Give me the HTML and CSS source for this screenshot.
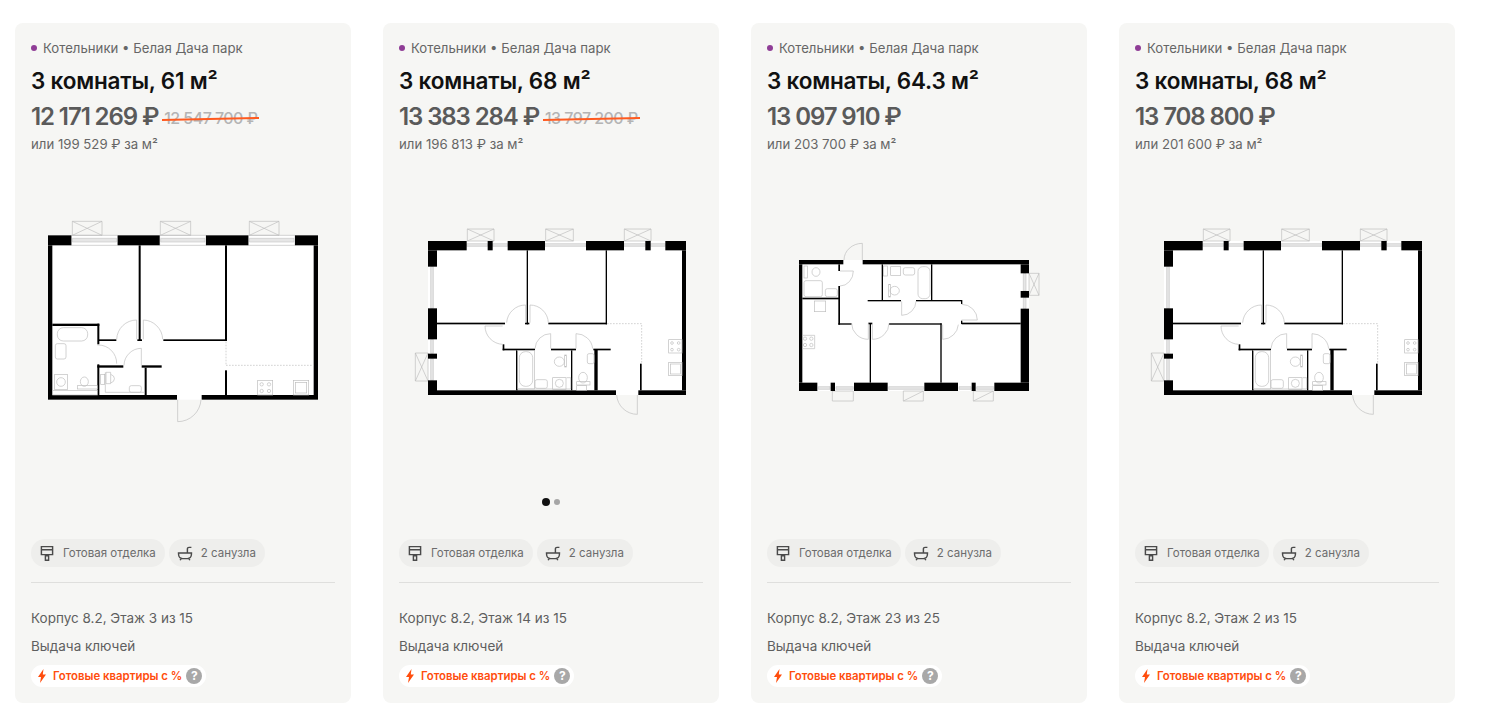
FILE: index.html
```html
<!DOCTYPE html>
<html lang="ru">
<head>
<meta charset="utf-8">
<title>Квартиры</title>
<link rel="stylesheet" href="styles.css">
</head>
<body>
<main class="grid">

<article class="card">
  <header class="head">
    <p class="loc"><span class="dot"></span>Котельники • Белая Дача парк</p>
    <h2 class="title">3 комнаты, 61 м²</h2>
    <p class="price">12 171 269 ₽ <s class="old">12 547 700 ₽</s></p>
    <p class="per">или 199 529 ₽ за м²</p>
  </header>
  <div class="plan">
    <svg class="fp" viewBox="-6 0 870 645">
      <rect class="floor" x="24" y="73" width="810" height="493"/>
      <g class="thin">
        <path d="M97 31h89v42H97zM97 31l89 42M186 31L97 73M361 31h91v42h-91zM361 31l91 42M452 31l-91 42M628 31h89v42h-89zM628 31l89 42M717 31l-89 42"/>
        <path d="M94 73h139v30H94zM359 73h139v30H359zM625 73h140v30H625z"/>
        <path class="band" d="M97 82h133v11H97zM362 82h133v11H362zM628 82h134v11H628z"/>
      </g>
      <g class="wall">
        <rect x="24" y="73" width="70" height="30"/><rect x="233" y="73" width="126" height="30"/><rect x="498" y="73" width="127" height="30"/><rect x="765" y="73" width="69" height="30"/>
        <rect x="24" y="103" width="13" height="449"/><rect x="821" y="103" width="13" height="449"/>
        <rect x="24" y="552" width="387" height="14"/><rect x="485" y="552" width="349" height="14"/>
        <rect x="296" y="103" width="6" height="285"/><rect x="555" y="103" width="6" height="287"/>
        <rect x="370" y="385" width="191" height="5"/><rect x="175" y="385" width="54" height="5"/><rect x="292" y="385" width="14" height="5"/>
        <rect x="37" y="338" width="141" height="7"/><rect x="172" y="338" width="6" height="62"/>
        <rect x="172" y="460" width="6" height="92"/><rect x="172" y="463" width="78" height="7"/><rect x="305" y="463" width="60" height="7"/>
        <rect x="314" y="470" width="6" height="82"/><rect x="555" y="478" width="6" height="74"/>
      </g>
      <g class="thin">
        <path d="M290 385V327A60 60 0 0 0 230 385M310 385V327A60 60 0 0 1 368 385M304 463V412A52 52 0 0 0 252 463M172 402H175A55 55 0 0 1 230 458M413 566V632A70 70 0 0 0 483 566"/>
        <path class="dash" d="M558 392V463M558 463H821"/>
        <rect x="52" y="350" width="91" height="40" rx="18"/><rect x="46" y="398" width="32" height="46" rx="6"/>
        <rect x="44" y="490" width="38" height="46"/><circle cx="63" cy="513" r="13"/><rect x="38" y="538" width="134" height="14"/>
        <ellipse cx="133" cy="512" rx="12" ry="14"/><rect x="112" y="524" width="60" height="10"/>
        <rect x="182" y="490" width="12" height="30"/><path d="M198 484h14v34h-14zM212 490a18 14 0 0 1 0 26"/><rect x="268" y="524" width="36" height="20" rx="6"/><path d="M196 484v60h118"/>
        <rect x="653" y="508" width="45" height="44"/><circle cx="665" cy="520" r="5"/><circle cx="687" cy="520" r="5"/><circle cx="665" cy="540" r="5"/><circle cx="687" cy="540" r="5"/>
        <rect x="760" y="508" width="46" height="44"/><rect x="766" y="514" width="34" height="32"/>
      </g>
    </svg>
  </div>
  <div class="foot">
    <div class="chips">
      <span class="chip"><svg class="ico" viewBox="0 0 20 20"><path d="M3 2h14v10H3zM3 6h14M10 12v1.500M8 13.500h4V19H8z"/></svg>Готовая отделка</span>
      <span class="chip"><svg class="ico" viewBox="0 0 20 20"><path d="M1 10h18M2 10v2a5 5 0 0 0 5 5h6a5 5 0 0 0 5-5v-2M13 10V5a2 2 0 0 1 2-2h3M5 17l-1 2M15 17l1 2"/></svg>2 санузла</span>
    </div>
    <hr class="rule">
    <p class="info">Корпус 8.2, Этаж 3 из 15</p>
    <p class="info">Выдача ключей</p>
    <p class="badge"><svg class="bolt" viewBox="0 0 10 14"><path d="M6.500 0L1 8h3l-1 6 6-8.500H5.800z"/></svg>Готовые квартиры с %<span class="q">?</span></p>
  </div>
</article>

<article class="card">
  <header class="head">
    <p class="loc"><span class="dot"></span>Котельники • Белая Дача парк</p>
    <h2 class="title">3 комнаты, 68 м²</h2>
    <p class="price">13 383 284 ₽ <s class="old">13 797 200 ₽</s></p>
    <p class="per">или 196 813 ₽ за м²</p>
  </header>
  <div class="plan">
    <svg class="fp" viewBox="-12 -30 870 645">
      <g id="plan-b">
      <rect class="floor" x="54" y="60" width="774" height="462"/>
      <g class="thin">
        <path d="M172 24h80v36h-80zM172 24l80 36M252 24l-80 36M407 24h83v36h-83zM407 24l83 36M490 24l-83 36M643 24h80v36h-80zM643 24l80 36M723 24l-80 36M16 396h38v84H16zM16 396l38 84M54 396L16 480"/>
        <path class="band" d="M170 68h63v8h-63zM248 68h45v8h-45zM405 68h123v8H405zM642 68h64v8h-64zM722 68h44v8h-44zM62 137h8v125h-8zM62 355h8v42h-8zM62 413h8v65h-8z"/>
      </g>
      <g class="wall">
        <rect x="54" y="60" width="116" height="28"/><rect x="233" y="60" width="15" height="28"/><rect x="293" y="60" width="112" height="28"/><rect x="528" y="60" width="114" height="28"/><rect x="706" y="60" width="16" height="28"/><rect x="766" y="60" width="62" height="28"/>
        <rect x="54" y="88" width="27" height="49"/><rect x="54" y="262" width="27" height="93"/><rect x="54" y="398" width="27" height="15"/><rect x="54" y="478" width="27" height="44"/>
        <rect x="816" y="88" width="12" height="420"/>
        <rect x="54" y="508" width="564" height="14"/><rect x="685" y="508" width="143" height="14"/>
        <rect x="350" y="88" width="4" height="222"/><rect x="587" y="88" width="4" height="222"/>
        <rect x="81" y="305" width="204" height="5"/><rect x="415" y="305" width="176" height="5"/><rect x="345" y="305" width="13" height="5"/>
        <rect x="278" y="370" width="5" height="18"/><rect x="278" y="383" width="97" height="5"/><rect x="423" y="383" width="75" height="5"/><rect x="550" y="383" width="52" height="5"/>
        <rect x="318" y="388" width="5" height="120"/><rect x="483" y="388" width="4" height="120"/><rect x="553" y="385" width="10" height="123"/><rect x="690" y="428" width="5" height="80"/>
      </g>
      <g class="thin">
        <path d="M347 305V252A57 57 0 0 0 290 305M360 305V252A55 55 0 0 1 415 305M278 315H225A55 55 0 0 0 278 370M422 383V338A47 47 0 0 0 375 383M498 383V338A50 50 0 0 1 548 383M682 522V580A62 62 0 0 1 620 522"/>
        <path class="dash" d="M591 308H695V428"/>
        <rect x="328" y="392" width="40" height="104" rx="18"/><rect x="323" y="388" width="50" height="116"/>
        <ellipse cx="448" cy="422" rx="15" ry="14"/><rect x="464" y="402" width="5" height="36"/>
        <rect x="375" y="476" width="37" height="26" rx="6"/><rect x="428" y="470" width="40" height="35"/><circle cx="448" cy="487" r="12"/><path d="M323 504H483M470 470h12v34"/>
        <rect x="532" y="398" width="20" height="30" rx="5"/><ellipse cx="519" cy="470" rx="13" ry="16"/><rect x="500" y="482" width="40" height="10"/><rect x="500" y="494" width="30" height="14"/>
        <rect x="776" y="356" width="40" height="40"/><circle cx="786" cy="366" r="4"/><circle cx="806" cy="366" r="4"/><circle cx="786" cy="386" r="4"/><circle cx="806" cy="386" r="4"/>
        <rect x="776" y="424" width="40" height="40"/><rect x="781" y="429" width="30" height="30"/>
      </g>
      </g>
    </svg>
    <div class="dots"><span class="pip on"></span><span class="pip"></span></div>
  </div>
  <div class="foot">
    <div class="chips">
      <span class="chip"><svg class="ico" viewBox="0 0 20 20"><path d="M3 2h14v10H3zM3 6h14M10 12v1.500M8 13.500h4V19H8z"/></svg>Готовая отделка</span>
      <span class="chip"><svg class="ico" viewBox="0 0 20 20"><path d="M1 10h18M2 10v2a5 5 0 0 0 5 5h6a5 5 0 0 0 5-5v-2M13 10V5a2 2 0 0 1 2-2h3M5 17l-1 2M15 17l1 2"/></svg>2 санузла</span>
    </div>
    <hr class="rule">
    <p class="info">Корпус 8.2, Этаж 14 из 15</p>
    <p class="info">Выдача ключей</p>
    <p class="badge"><svg class="bolt" viewBox="0 0 10 14"><path d="M6.500 0L1 8h3l-1 6 6-8.500H5.800z"/></svg>Готовые квартиры с %<span class="q">?</span></p>
  </div>
</article>

<article class="card">
  <header class="head">
    <p class="loc"><span class="dot"></span>Котельники • Белая Дача парк</p>
    <h2 class="title">3 комнаты, 64.3 м²</h2>
    <p class="price">13 097 910 ₽</p>
    <p class="per">или 203 700 ₽ за м²</p>
  </header>
  <div class="plan">
    <svg class="fp" viewBox="-48 -75 870 645">
      <rect class="floor" x="27" y="72" width="690" height="393"/>
      <g class="thin">
        <path d="M717 112h30v66h-30zM717 112l30 66M747 112l-30 66M127 465h63v30h-63zM340 465h60v30h-60zM340 495l60-30M550 465h60v30h-60zM550 495l60-30"/>
        <path class="band" d="M700 112h8v53h-8zM700 185h8v33h-8zM85 452h35v8H85zM138 452h52v8h-52zM296 452h105v8H296zM507 452h36v8h-36zM560 452h51v8h-51z"/>
      </g>
      <g class="wall">
        <rect x="27" y="72" width="133" height="13"/><rect x="218" y="72" width="499" height="13"/>
        <rect x="692" y="85" width="25" height="27"/><rect x="692" y="165" width="25" height="20"/><rect x="692" y="218" width="25" height="222"/>
        <rect x="27" y="85" width="10" height="355"/>
        <rect x="27" y="440" width="55" height="25"/><rect x="122" y="440" width="13" height="25"/><rect x="192" y="440" width="101" height="25"/><rect x="403" y="440" width="101" height="25"/><rect x="545" y="440" width="12" height="25"/><rect x="613" y="440" width="104" height="25"/>
        <rect x="145" y="85" width="5" height="20"/><rect x="145" y="150" width="5" height="116"/><rect x="145" y="262" width="40" height="4"/>
        <rect x="37" y="185" width="111" height="5"/>
        <rect x="233" y="192" width="100" height="4"/><rect x="378" y="192" width="137" height="4"/><rect x="513" y="192" width="4" height="12"/><rect x="513" y="254" width="4" height="10"/>
        <rect x="275" y="85" width="4" height="107"/><rect x="423" y="85" width="4" height="107"/>
        <rect x="239" y="262" width="4" height="178"/><rect x="235" y="260" width="12" height="5"/><rect x="297" y="262" width="158" height="4"/><rect x="451" y="262" width="4" height="178"/><rect x="515" y="260" width="177" height="5"/>
      </g>
      <g class="thin">
        <path d="M217 72V22A55 50 0 0 0 162 72M150 105H190A40 45 0 0 1 150 150M235 262V310A50 48 0 0 1 185 262M247 262V310A50 48 0 0 0 297 262M458 266V310A48 48 0 0 0 505 266M515 205A47 47 0 0 1 562 252H515M378 196A43 43 0 0 1 335 238V196"/>
        <rect x="42" y="90" width="10" height="36"/><ellipse cx="78" cy="108" rx="12" ry="13"/><rect x="42" y="134" width="55" height="48" rx="6"/><rect x="106" y="158" width="36" height="24" rx="6"/>
        <rect x="73" y="195" width="34" height="32"/><circle cx="45" cy="308" r="5"/><circle cx="64" cy="308" r="5"/><circle cx="45" cy="327" r="5"/><circle cx="64" cy="327" r="5"/><path d="M37 298h37v40H37"/>
        <rect x="280" y="90" width="12" height="30"/><rect x="302" y="92" width="30" height="26"/><rect x="340" y="95" width="34" height="22" rx="6"/><rect x="384" y="92" width="36" height="96" rx="14"/>
        <ellipse cx="314" cy="164" rx="14" ry="13"/><rect x="296" y="145" width="5" height="38"/>
      </g>
    </svg>
  </div>
  <div class="foot">
    <div class="chips">
      <span class="chip"><svg class="ico" viewBox="0 0 20 20"><path d="M3 2h14v10H3zM3 6h14M10 12v1.500M8 13.500h4V19H8z"/></svg>Готовая отделка</span>
      <span class="chip"><svg class="ico" viewBox="0 0 20 20"><path d="M1 10h18M2 10v2a5 5 0 0 0 5 5h6a5 5 0 0 0 5-5v-2M13 10V5a2 2 0 0 1 2-2h3M5 17l-1 2M15 17l1 2"/></svg>2 санузла</span>
    </div>
    <hr class="rule">
    <p class="info">Корпус 8.2, Этаж 23 из 25</p>
    <p class="info">Выдача ключей</p>
    <p class="badge"><svg class="bolt" viewBox="0 0 10 14"><path d="M6.500 0L1 8h3l-1 6 6-8.500H5.800z"/></svg>Готовые квартиры с %<span class="q">?</span></p>
  </div>
</article>

<article class="card">
  <header class="head">
    <p class="loc"><span class="dot"></span>Котельники • Белая Дача парк</p>
    <h2 class="title">3 комнаты, 68 м²</h2>
    <p class="price">13 708 800 ₽</p>
    <p class="per">или 201 600 ₽ за м²</p>
  </header>
  <div class="plan">
    <svg class="fp" viewBox="-12 -30 870 645"><use href="#plan-b"/></svg>
  </div>
  <div class="foot">
    <div class="chips">
      <span class="chip"><svg class="ico" viewBox="0 0 20 20"><path d="M3 2h14v10H3zM3 6h14M10 12v1.500M8 13.500h4V19H8z"/></svg>Готовая отделка</span>
      <span class="chip"><svg class="ico" viewBox="0 0 20 20"><path d="M1 10h18M2 10v2a5 5 0 0 0 5 5h6a5 5 0 0 0 5-5v-2M13 10V5a2 2 0 0 1 2-2h3M5 17l-1 2M15 17l1 2"/></svg>2 санузла</span>
    </div>
    <hr class="rule">
    <p class="info">Корпус 8.2, Этаж 2 из 15</p>
    <p class="info">Выдача ключей</p>
    <p class="badge"><svg class="bolt" viewBox="0 0 10 14"><path d="M6.500 0L1 8h3l-1 6 6-8.500H5.800z"/></svg>Готовые квартиры с %<span class="q">?</span></p>
  </div>
</article>

</main>
</body>
</html>
```
FILE: styles.css
```css
* { box-sizing: border-box; }
html, body { margin: 0; height: 100%; background: #fff; overflow: hidden; }
body { font-family: Inter, "Noto Sans", sans-serif; color: #555; }
p, h2 { margin: 0; }

.grid { display: grid; grid-template-columns: repeat(4, 336px); gap: 32px; padding: 23px 0 0 15px; }
.card { display: flex; flex-direction: column; height: 680px; background: #f6f6f4; border-radius: 8px; position: relative; }

.head { padding: 16px 16px 0; }
.loc { display: flex; align-items: center; height: 18px; font-size: 13.200px; line-height: 18px; color: #666; }
.dot { width: 6px; height: 6px; margin: 0 6px 0 0; border-radius: 50%; background: #8f3d96; }
.title { margin-top: 10px; font-size: 22.500px; line-height: 28px; font-weight: 600; letter-spacing: -0.2px; color: #111; }
.price { margin-top: 6px; height: 32px; font-size: 24px; line-height: 32px; font-weight: 600; letter-spacing: -1.100px; color: #5a5a5a; }
.old { display: inline-block; position: relative; margin-left: 1px; font-size: 16px; line-height: 16px; font-weight: 500; letter-spacing: -0.55px; color: #b4b4b4; text-decoration: none; transform: translateY(-1px); }
.old::after { content: ""; position: absolute; left: -2px; right: -2px; top: 8px; height: 1.5px; background: #ff5a1f; transform: rotate(-1.2deg); }
.per { margin-top: 3px; font-size: 13.200px; line-height: 16px; color: #666; }

.plan { flex: 1; display: flex; justify-content: center; padding-top: 59px; position: relative; }
.fp { width: 290px; height: 215px; display: block; }
.floor { fill: #fff; }
.wall rect { fill: #000; }
.thin { fill: none; stroke: #bdbdbd; stroke-width: 2; }
.thin .band { fill: #e6e6e6; stroke: #c8c8c8; }
.thin .dash { stroke-dasharray: 5 4; }

.dots { position: absolute; left: 0; right: 0; bottom: 33px; display: flex; justify-content: center; align-items: center; gap: 4px; }
.pip { width: 6px; height: 6px; border-radius: 50%; background: #a6a6a6; }
.pip.on { width: 8px; height: 8px; background: #111; }

.foot { padding: 0 16px 16px; }
.chips { display: flex; gap: 4px; }
.chip { display: flex; align-items: center; gap: 8px; height: 28px; padding: 0 9px 0 8px; border-radius: 14px; background: #eeeeec; font-size: 11.500px; color: #6c6c6c; white-space: nowrap; }
.ico { width: 16px; height: 16px; fill: none; stroke: #4a4a4a; stroke-width: 1.8; }
.rule { height: 1px; margin: 15px 0 0; border: 0; background: #dfdfdd; }
.info { margin-top: 8px; font-size: 13.500px; line-height: 20px; color: #5f5f5f; }
.rule + .info { margin-top: 25px; }
.badge { display: inline-flex; align-items: center; height: 22px; margin-top: 9px; padding: 0 4px 0 6px; border-radius: 11px; background: #fff; font-size: 11.400px; font-weight: 600; color: #ff4d0d; white-space: nowrap; }
.bolt { width: 10px; height: 14px; margin-right: 6px; fill: #ff4d0d; }
.q { width: 16px; height: 16px; margin-left: 4px; border-radius: 50%; background: #a8a8a8; color: #fff; font-size: 12px; font-weight: 700; line-height: 16px; text-align: center; }
```
